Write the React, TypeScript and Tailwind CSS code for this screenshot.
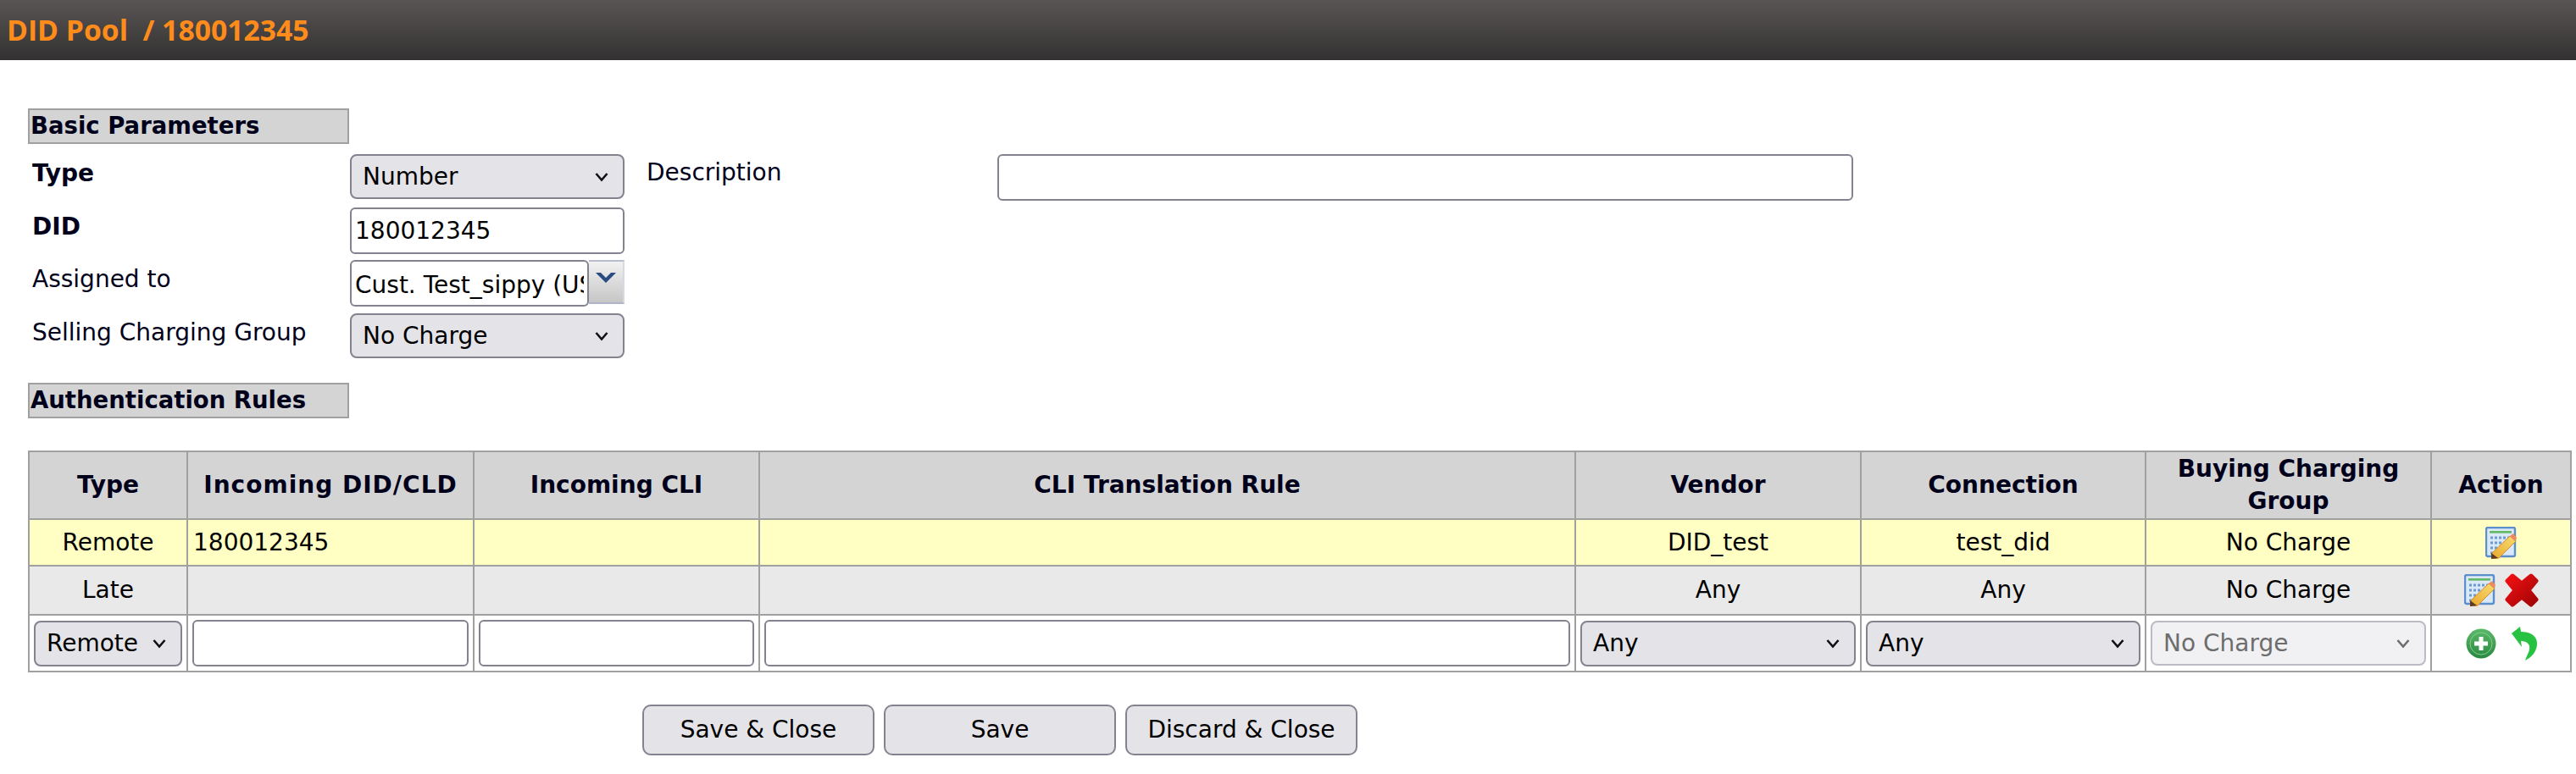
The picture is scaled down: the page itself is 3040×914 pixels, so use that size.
import React from 'react';

const FONT = "font-['DejaVu_Sans',sans-serif]";
const INPUT = 'h-[55px] rounded-[6px] border-2 border-[#84828f] bg-white px-[4px] text-[28px] text-black outline-none';
const BUTTON = 'h-[60px] w-[274px] rounded-[10px] border-2 border-[#84828f] bg-[#e4e3e8] text-[28px] text-black';

function Dropdown({ value, height = 'h-[53px]', disabled = false }: { value: string; height?: string; disabled?: boolean }) {
  return (
    <div className="relative w-full">
      <select
        disabled={disabled}
        defaultValue={value}
        className={
          disabled
            ? `${height} w-full appearance-none rounded-[8px] border-2 border-[#bcbbc5] bg-[#f1f1f4] pl-[13px] text-[28px] text-[#6d6d6d]`
            : `${height} w-full appearance-none rounded-[8px] border-2 border-[#84828f] bg-[#e4e3e8] pl-[13px] text-[28px] text-black`
        }
      >
        <option>{value}</option>
      </select>
      {/* select arrow */}
      <svg
        width="16"
        height="11"
        viewBox="0 0 16 11"
        className="pointer-events-none absolute top-1/2 right-[19px] -translate-y-1/2"
      >
        <path d="M1.5 1.5 8 9l6.5-7.5" fill="none" stroke={disabled ? '#6d6d6d' : '#111'} strokeWidth="2.6" />
      </svg>
    </div>
  );
}

function EditIcon() {
  return (
    <svg width="38" height="38" viewBox="0 0 38 38" className="inline-block blur-[0.4px]">
      <defs>
        <linearGradient id="pencil" x1="0" y1="1" x2="1" y2="0">
          <stop offset="0" stopColor="#e8a92f" />
          <stop offset="1" stopColor="#f8dc70" />
        </linearGradient>
      </defs>
      <rect x="1" y="1" width="34" height="34" rx="2" fill="#dbe8f8" stroke="#5b8fcc" strokeWidth="2.4" />
      <rect x="5" y="5" width="26" height="2.6" fill="#62b964" />
      <path d="M6 13h24M6 19h14M6 25h10M6 31h8" stroke="#6c9bd4" strokeWidth="3" strokeDasharray="3 2" />
      <path d="M8 31 29 11l7 6-20 20-8 1z" fill="url(#pencil)" stroke="#d88a2f" strokeWidth="1" />
      <path d="M29 11l4-3 4 5-2 4z" fill="#ee8a5b" />
      <path d="M7 31l8 6-8 1z" fill="#5d3a24" />
    </svg>
  );
}

function DeleteIcon() {
  return (
    <svg width="40" height="40" viewBox="0 0 40 40" className="inline-block blur-[0.4px]">
      <defs>
        <linearGradient id="cross" x1="0" y1="0" x2="1" y2="1">
          <stop offset="0" stopColor="#f40f12" />
          <stop offset="1" stopColor="#9f0505" />
        </linearGradient>
      </defs>
      <path
        d="M9 3 20 12 31 3l6 6-9 11 9 11-6 6-11-9-11 9-6-6 9-11L3 9z"
        fill="url(#cross)"
        stroke="url(#cross)"
        strokeWidth="5"
        strokeLinejoin="round"
      />
    </svg>
  );
}

function AddIcon() {
  return (
    <svg width="36" height="36" viewBox="0 0 36 36" className="inline-block blur-[0.4px]">
      <defs>
        <linearGradient id="plus" x1="0" y1="0" x2="0" y2="1">
          <stop offset="0" stopColor="#5cb96a" />
          <stop offset="1" stopColor="#2a8840" />
        </linearGradient>
      </defs>
      <circle cx="18" cy="18" r="17.5" fill="url(#plus)" />
      <circle cx="18" cy="18" r="13" fill="none" stroke="#7fcf8c" strokeWidth="1" />
      <path d="M18 10v16M10 18h16" stroke="#fff" strokeWidth="5" />
    </svg>
  );
}

function UndoIcon() {
  return (
    <svg width="31" height="40" viewBox="0 0 31 40" className="inline-block blur-[0.4px]">
      <path d="M1 8 11 0l1 6c10 0 19 4 19 14 0 9-6 16-14 20 2-7 6-11 5-17-1-4-5-6-10-6l1 7z" fill="#27c242" />
    </svg>
  );
}

function SectionTitle({ title }: { title: string }) {
  return (
    <div className="h-[42px] w-[379px] border-2 border-[#a0a0a0] bg-[#d4d4d4] pl-[1px] text-[27.5px] leading-[36px] font-bold text-[#00001a]">
      {title}
    </div>
  );
}

const TH = 'border-2 border-[#a0a0a0] bg-[#d4d4d4] text-center align-middle text-[28px] leading-[38px] font-bold text-[#00001a]';
const TD = 'border-2 border-[#a0a0a0] text-center align-middle text-[28px] text-black';
const TD_FORM = 'border-2 border-[#a0a0a0] px-[5px] align-middle';
const LABEL = 'pl-[5px] text-[28px] leading-[46px] text-[#00001a]';

export default function App() {
  return (
    <div className={`min-h-screen bg-white ${FONT}`}>
      {/* Header */}
      <div className="flex h-[71px] items-center bg-gradient-to-b from-[#5a5555] to-[#333131] pl-[8px] font-['Open_Sans',sans-serif] text-[33.7px] font-bold whitespace-pre text-[#ff8c1a]">
        DID Pool{'  '}/ 180012345
      </div>

      <main className="px-[33px] pt-[57px]">
        <SectionTitle title="Basic Parameters" />

        {/* Basic Parameters */}
        <div className="mt-[12px] grid grid-cols-[380px_324px_26px_414px_1010px] grid-rows-[63px_62px_63px_52px] items-start">
          <div className={`${LABEL} font-bold`}>Type</div>
          <Dropdown value="Number" />
          <div />
          <div className="text-[28px] leading-[44px] text-[#00001a]">Description</div>
          <input className={`${INPUT} w-full`} />

          <div className={`${LABEL} font-bold`}>DID</div>
          <input className={`${INPUT} w-full`} defaultValue="180012345" />
          <div className="col-span-3" />

          <div className={LABEL}>Assigned to</div>
          <div className="flex h-[55px] items-start">
            <input className={`${INPUT} w-[282px] pt-[4px]`} defaultValue="Cust. Test_sippy (USD)" />
            <div className="flex h-[52px] w-[42px] items-center justify-center border-2 border-t-[#b8bccc] border-r-[#d6d9e4] border-b-[#b0b4c8] border-l-0 bg-gradient-to-b from-[#f2f2f2] to-[#c6c6c6] pb-[12px]">
              <svg width="24" height="14" viewBox="0 0 24 14">
                <path d="M0 2h6l6 6 6-6h6L12 14z" fill="#2a4a82" />
              </svg>
            </div>
          </div>
          <div className="col-span-3" />

          <div className={LABEL}>Selling Charging Group</div>
          <Dropdown value="No Charge" />
          <div className="col-span-3" />
        </div>

        <div className="mt-[30px]">
          <SectionTitle title="Authentication Rules" />
        </div>

        {/* Authentication Rules */}
        <table className="mt-[38px] w-[3000px] table-fixed border-collapse">
          <colgroup>
            <col className="w-[187px]" />
            <col className="w-[338px]" />
            <col className="w-[337px]" />
            <col className="w-[963px]" />
            <col className="w-[337px]" />
            <col className="w-[336px]" />
            <col className="w-[337px]" />
            <col className="w-[165px]" />
          </colgroup>
          <thead>
            <tr className="h-[80px]">
              <th className={TH}>Type</th>
              <th className={`${TH} tracking-[1px]`}>Incoming DID/CLD</th>
              <th className={TH}>Incoming CLI</th>
              <th className={TH}>CLI Translation Rule</th>
              <th className={TH}>Vendor</th>
              <th className={TH}>Connection</th>
              <th className={TH}>Buying Charging Group</th>
              <th className={TH}>Action</th>
            </tr>
          </thead>
          <tbody>
            <tr className="h-[55px] bg-[#ffffc4]">
              <td className={TD}>Remote</td>
              <td className={`${TD} pl-[6px] text-left`}>180012345</td>
              <td className={TD} />
              <td className={TD} />
              <td className={TD}>DID_test</td>
              <td className={TD}>test_did</td>
              <td className={TD}>No Charge</td>
              <td className={TD}>
                <div className="flex justify-center">
                  <EditIcon />
                </div>
              </td>
            </tr>
            <tr className="h-[58px] bg-[#e9e9e9]">
              <td className={TD}>Late</td>
              <td className={TD} />
              <td className={TD} />
              <td className={TD} />
              <td className={TD}>Any</td>
              <td className={TD}>Any</td>
              <td className={TD}>No Charge</td>
              <td className={TD}>
                <div className="flex items-center justify-center gap-[10px]">
                  <EditIcon />
                  <DeleteIcon />
                </div>
              </td>
            </tr>
            <tr className="h-[67px]">
              <td className={TD_FORM}>
                <Dropdown value="Remote" height="h-[54px]" />
              </td>
              <td className={TD_FORM}>
                <input className={`${INPUT} w-full`} />
              </td>
              <td className={TD_FORM}>
                <input className={`${INPUT} w-full`} />
              </td>
              <td className={TD_FORM}>
                <input className={`${INPUT} w-full`} />
              </td>
              <td className={TD_FORM}>
                <Dropdown value="Any" height="h-[54px]" />
              </td>
              <td className={TD_FORM}>
                <Dropdown value="Any" height="h-[54px]" />
              </td>
              <td className={TD_FORM}>
                <Dropdown value="No Charge" disabled />
              </td>
              <td className={TD}>
                <div className="flex items-center justify-center gap-[17px]">
                  <AddIcon />
                  <UndoIcon />
                </div>
              </td>
            </tr>
          </tbody>
        </table>

        <div className="mt-[38px] flex gap-[11px] pl-[725px]">
          <button className={BUTTON}>Save &amp; Close</button>
          <button className={BUTTON}>Save</button>
          <button className={BUTTON}>Discard &amp; Close</button>
        </div>
      </main>
    </div>
  );
}
